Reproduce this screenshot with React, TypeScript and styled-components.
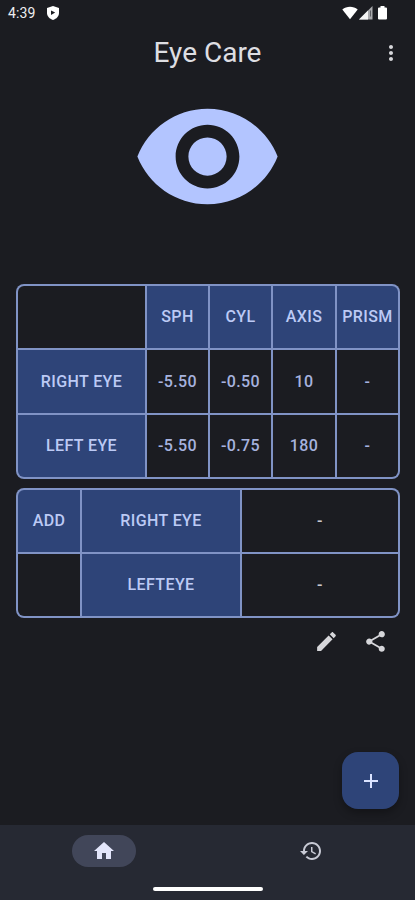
import React from 'react';
import styled, { createGlobalStyle } from 'styled-components';

const GlobalStyle = createGlobalStyle`
  * { box-sizing: border-box; }
  body { margin: 0; background: #1b1c21; font-family: Roboto, "Liberation Sans", sans-serif; }
`;

const Screen = styled.div`
  width: 415px;
  height: 900px;
  display: flex;
  flex-direction: column;
  background: #1b1c21;
  overflow: hidden;
`;

const StatusBar = styled.header`
  height: 26px;
  flex: none;
  display: flex;
  align-items: center;
  padding: 0 27px 0 8px;
  color: #fff;
  svg { display: block; }
`;

const Clock = styled.span`
  width: 38px;
  font-size: 14px;
  line-height: 26px;
  letter-spacing: 0.1px;
  color: #eeeef0;
`;

const StatusIcons = styled.div`
  margin-left: auto;
  display: flex;
  align-items: center;
`;

const TitleBar = styled.div`
  height: 54px;
  flex: none;
  display: grid;
  grid-template-columns: 48px 1fr 48px;
  align-items: center;
`;

const Title = styled.h1`
  grid-column: 2;
  margin: 0;
  text-align: center;
  font-size: 28px;
  line-height: 36px;
  font-weight: 400;
  color: #dedee2;
`;

const IconButton = styled.button`
  border: 0;
  padding: 0;
  background: none;
  display: grid;
  place-items: center;
  color: #d6d6da;
`;

const Hero = styled.div`
  height: 204px;
  flex: none;
  display: flex;
  justify-content: center;
  color: #b3c5ff;
`;

const Table = styled.section<{ $columns: string; $rows: string }>`
  flex: none;
  display: grid;
  grid-template-columns: ${p => p.$columns};
  grid-template-rows: ${p => p.$rows};
  gap: 2px;
  padding: 2px;
  margin: 0 15px 0 16px;
  background: #8093c5;
  border-radius: 8px;
  overflow: hidden;
  & + & { margin-top: 9px; }
`;

type Corner = 'tl' | 'tr' | 'bl' | 'br';
const radii: Record<Corner, string> = {
  tl: '6px 0 0 0', tr: '0 6px 0 0', br: '0 0 6px 0', bl: '0 0 0 6px',
};

const Cell = styled.div<{ $head?: boolean; $plain?: boolean; $corner?: Corner }>`
  display: flex;
  align-items: center;
  justify-content: center;
  white-space: nowrap;
  background: ${p => (p.$head ? '#2e4478' : '#1b1c21')};
  color: ${p => (p.$head ? '#bccaf5' : p.$plain ? '#c9c9cf' : '#a6b2de')};
  border-radius: ${p => (p.$corner ? radii[p.$corner] : '0')};
  font-size: 16px;
  line-height: 22px;
  font-weight: 500;
  letter-spacing: 0.4px;
`;

const Actions = styled.div`
  height: 47px;
  flex: none;
  display: flex;
  justify-content: flex-end;
  padding-right: 15px;
  ${IconButton} { width: 49px; height: 47px; }
`;

const FabArea = styled.div`
  flex: 1;
  display: flex;
  align-items: flex-end;
  justify-content: flex-end;
  padding: 0 16px 16px 0;
`;

const Fab = styled.button`
  width: 57px;
  height: 57px;
  border: 0;
  border-radius: 16px;
  padding: 0;
  background: #2e4478;
  color: #dbe3ff;
  display: grid;
  place-items: center;
  box-shadow: 0 4px 8px rgba(0, 0, 0, 0.3);
`;

const BottomNav = styled.nav`
  height: 75px;
  flex: none;
  display: grid;
  grid-template-columns: 1fr 1fr;
  grid-template-rows: 52px 23px;
  background: #262933;
`;

const NavItem = styled.div`
  display: grid;
  place-items: center;
`;

const NavPill = styled.div<{ $active?: boolean }>`
  width: 64px;
  height: 32px;
  border-radius: 16px;
  display: grid;
  place-items: center;
  background: ${p => (p.$active ? '#414659' : 'transparent')};
  color: ${p => (p.$active ? '#e3e6fb' : '#c8cad5')};
`;

const HomeIndicator = styled.div`
  grid-column: 1 / -1;
  justify-self: center;
  align-self: center;
  width: 110px;
  height: 4px;
  border-radius: 2px;
  background: #fff;
`;

const Icon = ({ d, size }: { d: string; size: number }) => (
  <svg width={size} height={size} viewBox="0 0 24 24" fill="currentColor" aria-hidden="true">
    <path d={d} />
  </svg>
);

const paths = {
  eye: 'M12 4.5C7 4.5 2.73 7.61 1 12c1.73 4.39 6 7.5 11 7.5s9.27-3.11 11-7.5c-1.73-4.39-6-7.5-11-7.5zM12 17c-2.76 0-5-2.24-5-5s2.24-5 5-5 5 2.24 5 5-2.24 5-5 5zm0-8c-1.66 0-3 1.34-3 3s1.34 3 3 3 3-1.34 3-3-1.34-3-3-3z',
  more: 'M12 8c1.1 0 2-.9 2-2s-.9-2-2-2-2 .9-2 2 .9 2 2 2zm0 2c-1.1 0-2 .9-2 2s.9 2 2 2 2-.9 2-2-.9-2-2-2zm0 6c-1.1 0-2 .9-2 2s.9 2 2 2 2-.9 2-2-.9-2-2-2z',
  edit: 'M3 17.25V21h3.75L17.81 9.94l-3.75-3.75L3 17.25zM20.71 7.04c.39-.39.39-1.02 0-1.41l-2.34-2.34c-.39-.39-1.02-.39-1.41 0l-1.83 1.83 3.75 3.75 1.83-1.83z',
  share: 'M18 16.08c-.76 0-1.44.3-1.96.77L8.91 12.7c.05-.23.09-.46.09-.7s-.04-.47-.09-.7l7.05-4.11c.54.5 1.25.81 2.04.81 1.66 0 3-1.34 3-3s-1.34-3-3-3-3 1.34-3 3c0 .24.04.47.09.7L8.04 9.81C7.5 9.31 6.79 9 6 9c-1.66 0-3 1.34-3 3s1.34 3 3 3c.79 0 1.5-.31 2.04-.81l7.12 4.16c-.05.21-.08.43-.08.65 0 1.61 1.31 2.92 2.92 2.92s2.92-1.31 2.92-2.92-1.31-2.92-2.92-2.92z',
  add: 'M19 13h-6v6h-2v-6H5v-2h6V5h2v6h6v2z',
  home: 'M10 20v-6h4v6h5v-8h3L12 3 2 12h3v8z',
  history: 'M13 3c-4.97 0-9 4.03-9 9H1l3.89 3.89.07.14L9 12H6c0-3.87 3.13-7 7-7s7 3.13 7 7-3.13 7-7 7c-1.93 0-3.68-.79-4.94-2.06l-1.42 1.42C8.27 19.99 10.51 21 13 21c4.97 0 9-4.03 9-9s-4.03-9-9-9zm-1 5v5l4.28 2.54.72-1.21-3.5-2.08V8H12z',
};

const ShieldIcon = () => (
  <svg width="14" height="16" viewBox="0 0 14 16" aria-hidden="true">
    <path d="M7 1 13 3v5c0 3.300-2.500 5.800-6 7-3.500-1.200-6-3.700-6-7V3z" fill="#fff" />
    <path d="M5 5.400v4.500L9.200 7.600z" fill="#1b1c21" />
  </svg>
);

const SignalIcons = () => (
  <svg width="46" height="16" viewBox="0 0 46 16" aria-hidden="true">
    <path d="M.3 4.600C4.500.8 11.500.8 15.700 4.600L8 14.200z" fill="#fff" />
    <path d="M17 14.500 30.500 1v13.500z" fill="#a9aaad" />
    <path d="M17 14.500 26 5.500v9z" fill="#f4f4f4" />
    <path d="M28 5.500h1v6h-1z" fill="#606166" />
    <path d="M38.500 1h4v1.400h1.500q1 0 1 1v10.200q0 1-1 1h-7q-1 0-1-1V3.400q0-1 1-1h1.500z" fill="#fff" />
  </svg>
);

export default function App() {
  return (
    <>
      <GlobalStyle />
      <Screen>
        <StatusBar>
          <Clock>4:39</Clock>
          <ShieldIcon />
          <StatusIcons><SignalIcons /></StatusIcons>
        </StatusBar>
        <TitleBar>
          <Title>Eye Care</Title>
          <IconButton aria-label="More options"><Icon d={paths.more} size={24} /></IconButton>
        </TitleBar>
        <Hero><Icon d={paths.eye} size={153} /></Hero>
        <Table $columns="127px 61px 61px 62px 61px" $rows="62px 63px 62px">
          <Cell $corner="tl" />
          <Cell $head>SPH</Cell>
          <Cell $head>CYL</Cell>
          <Cell $head>AXIS</Cell>
          <Cell $head $corner="tr">PRISM</Cell>
          <Cell $head>RIGHT EYE</Cell>
          <Cell>-5.50</Cell>
          <Cell>-0.50</Cell>
          <Cell>10</Cell>
          <Cell>-</Cell>
          <Cell $head $corner="bl">LEFT EYE</Cell>
          <Cell>-5.50</Cell>
          <Cell>-0.75</Cell>
          <Cell>180</Cell>
          <Cell $corner="br">-</Cell>
        </Table>
        <Table $columns="62px 158px 156px" $rows="62px 62px">
          <Cell $head $corner="tl">ADD</Cell>
          <Cell $head>RIGHT EYE</Cell>
          <Cell $plain $corner="tr">-</Cell>
          <Cell $corner="bl" />
          <Cell $head>LEFTEYE</Cell>
          <Cell $plain $corner="br">-</Cell>
        </Table>
        <Actions>
          <IconButton aria-label="Edit"><Icon d={paths.edit} size={25} /></IconButton>
          <IconButton aria-label="Share"><Icon d={paths.share} size={25} /></IconButton>
        </Actions>
        <FabArea>
          <Fab aria-label="Add"><Icon d={paths.add} size={24} /></Fab>
        </FabArea>
        <BottomNav>
          <NavItem><NavPill $active><Icon d={paths.home} size={24} /></NavPill></NavItem>
          <NavItem><NavPill><Icon d={paths.history} size={24} /></NavPill></NavItem>
          <HomeIndicator />
        </BottomNav>
      </Screen>
    </>
  );
}
